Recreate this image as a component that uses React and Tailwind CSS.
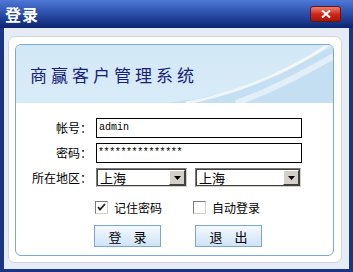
import React from 'react';

const cjk = { fontFamily: '"Noto Sans CJK SC", "Noto Sans", sans-serif' };
const mono = { fontFamily: '"Liberation Mono", "DejaVu Sans Mono", monospace' };

function Select({ width }) {
  return (
    <div
      className={`${width} h-[19px] flex items-center bg-white border border-t-[#7a7a7a] border-l-[#7a7a7a] border-r-[#d4d0c8] border-b-[#d4d0c8] outline outline-1 outline-[#404040] -outline-offset-[2px]`}
    >
      <span className="flex-1 pl-[3px] text-[13px] leading-none text-black" style={cjk}>
        上海
      </span>
      <div className="w-[16px] h-[15px] mr-[1px] bg-[#d4d0c8] border border-t-white border-l-white border-r-[#404040] border-b-[#404040] flex items-center justify-center">
        <svg width="7" height="4" viewBox="0 0 7 4">
          <path d="M0 0h7L3.5 4z" fill="#000" />
        </svg>
      </div>
    </div>
  );
}

function Check({ checked, label }) {
  return (
    <div className="flex items-center gap-[6px]">
      <div className="w-[13px] h-[13px] bg-white border border-t-[#7a7a7a] border-l-[#7a7a7a] border-r-[#d4d0c8] border-b-[#d4d0c8] flex items-center justify-center">
        {checked && (
          <svg width="9" height="9" viewBox="0 0 9 9">
            <path d="M1 4l2 2.5L8 1" stroke="#222" strokeWidth="1.8" fill="none" />
          </svg>
        )}
      </div>
      <span className="text-[12px] text-black leading-none" style={cjk}>
        {label}
      </span>
    </div>
  );
}

function Btn({ children }) {
  return (
    <button
      className="w-[67px] h-[22px] border border-[#7ba7d8] bg-gradient-to-b from-[#f4f9fe] to-[#cfe3f6] text-[13px] text-black tracking-[12px] pl-[12px] leading-none"
      style={cjk}
    >
      {children}
    </button>
  );
}

export default function App() {
  return (
    <div className="w-[353px] h-[272px] bg-[#1b3583] flex flex-col">
      <div className="h-[28px] flex items-center justify-between px-[5px] bg-gradient-to-b from-[#4f78d8] via-[#2a4ea8] to-[#0c2470]">
        <span className="text-white text-[16px] font-bold leading-none tracking-[1px]" style={cjk}>
          登录
        </span>
        <div className="w-[31px] h-[16px] mr-[7px] rounded-[3px] border border-[#5a1a1a] bg-gradient-to-b from-[#f07a6a] via-[#d0281a] to-[#a81408] flex items-center justify-center">
          <svg width="10" height="8" viewBox="0 0 10 8">
            <path d="M1 0.5l8 7M9 0.5l-8 7" stroke="#fff" strokeWidth="2" />
          </svg>
        </div>
      </div>
      <div className="flex-1 mx-[4px] mb-[3px] bg-[#e6ecf5] pl-[4px] pt-[8px] pr-[7px] pb-[6px] flex">
        <div className="flex-1 bg-white rounded-[7px] border border-[#d2d6dc] pl-[6px] pt-[7px] pr-[7px] pb-[6px] flex">
          <div className="flex-1 rounded-[6px] border border-[#7aa8d8] overflow-hidden flex flex-col">
            <div className="relative h-[58px] bg-gradient-to-b from-[#d3e8f6] to-[#d8ebf8] flex items-center pl-[14px]">
              <svg className="absolute inset-0" width="320" height="58" viewBox="0 0 320 58">
                <path d="M150 58 C230 50 280 20 320 0 L320 58 Z" fill="#c4def2" />
                <path d="M170 58 C240 45 290 15 312 0" stroke="#ffffff" strokeOpacity="0.7" strokeWidth="3" fill="none" />
                <path d="M220 58 C270 40 300 20 320 10" stroke="#ffffff" strokeOpacity="0.5" strokeWidth="6" fill="none" />
              </svg>
              <span
                className="relative text-[17px] text-[#16207a] tracking-[4px] leading-none"
                style={{ fontFamily: '"Noto Sans CJK SC", serif' }}
              >
                商赢客户管理系统
              </span>
            </div>
            <div className="flex flex-col pt-[15px] pl-[16px]">
              <div className="flex items-center h-[20px]">
                <span className="w-[64px] text-right pr-[4px] text-[12px] text-black leading-none" style={cjk}>
                  帐号：
                </span>
                <div className="w-[206px] h-[20px] border border-black flex items-center pl-[2px]">
                  <span className="text-[10px] text-black leading-none" style={mono}>
                    admin
                  </span>
                </div>
              </div>
              <div className="flex items-center h-[20px] mt-[5px]">
                <span className="w-[64px] text-right pr-[4px] text-[12px] text-black leading-none" style={cjk}>
                  密码：
                </span>
                <div className="w-[206px] h-[20px] border border-black flex items-center pl-[1px]">
                  <span className="text-[10px] text-black leading-none tracking-[-0.4px]" style={mono}>
                    ***************
                  </span>
                </div>
              </div>
              <div className="flex items-center h-[19px] mt-[5px]">
                <span className="w-[64px] text-right pr-[4px] text-[12px] text-black leading-none whitespace-nowrap" style={cjk}>
                  所在地区：
                </span>
                <Select width="w-[91px]" />
                <div className="w-[8px]" />
                <Select width="w-[106px]" />
              </div>
              <div className="flex items-center mt-[14px] pl-[63px] gap-[31px]">
                <Check checked label="记住密码" />
                <Check label="自动登录" />
              </div>
              <div className="flex items-center mt-[11px] pl-[62px] gap-[34px]">
                <Btn>登录</Btn>
                <Btn>退出</Btn>
              </div>
            </div>
          </div>
        </div>
      </div>
    </div>
  );
}
